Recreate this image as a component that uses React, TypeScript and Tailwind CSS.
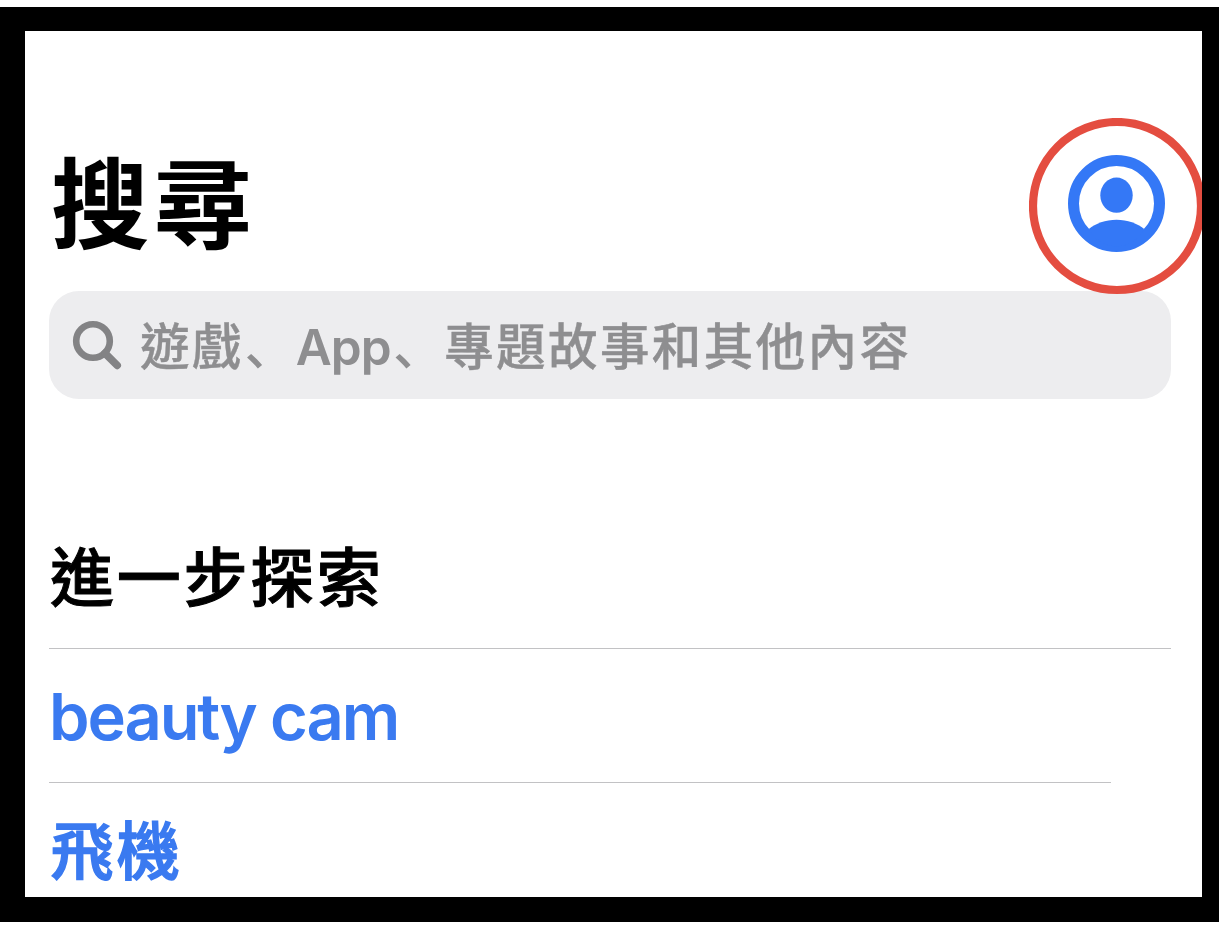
function ProfileIcon() {
  return (
    <svg className="block size-[98px]" viewBox="0 0 98 98" aria-hidden="true">
      <circle cx="49.5" cy="49.5" r="43" fill="#fff" stroke="#3478f6" strokeWidth="11" />
      <ellipse cx="49.5" cy="41.2" rx="16.2" ry="17.6" fill="#3478f6" />
      <path d="M21.8 75.1C28.5 69.5 38.5 65.8 49.5 65.8s21 3.7 27.7 9.3C72.5 84.5 61.5 92.5 49.5 92.5S26.5 84.5 21.8 75.1Z" fill="#3478f6" />
    </svg>
  );
}

function SearchIcon() {
  return (
    <svg className="block size-[50px] shrink-0" viewBox="0 0 50 50" fill="none" stroke="#838385" aria-hidden="true">
      <circle cx="21" cy="21" r="16.8" strokeWidth="6.6" />
      <path d="M33 33.2L45.2 45.4" strokeWidth="7.6" strokeLinecap="round" />
    </svg>
  );
}

function Comma() {
  return <span className="relative left-px font-['Noto_Sans_CJK_JP',sans-serif] [-webkit-text-stroke:0]">、</span>;
}

export default function App() {
  return (
    <div className="h-[925px] w-[1219px] overflow-hidden bg-white pt-[7px] font-[Inter,'Noto_Sans_CJK_TC',sans-serif]">
      <div className="h-[915px] bg-black pt-[24px] pr-[17px] pb-[25px] pl-[24.5px]">
        <main className="flex h-full flex-col overflow-hidden bg-white pl-[24.5px]">
          <header className="flex h-[260px] shrink-0 items-start justify-between pr-[37px]">
            <h1 className="mt-[115px] ml-[2px] text-[98.5px] leading-[120px] font-bold tracking-[4px] text-black">搜尋</h1>
            <div className="relative mt-[123px]">
              <ProfileIcon />
              <svg className="absolute -top-[36px] -left-[38px] size-[177px] max-w-none" viewBox="0 0 177 177" fill="none" aria-hidden="true">
                <circle cx="88" cy="88" r="84" stroke="#e44d40" strokeWidth="8.2" />
              </svg>
            </div>
          </header>

          <div className="mr-[31px] flex h-[108px] shrink-0 items-center rounded-[30px] bg-[#ededef] pl-[23px]">
            <SearchIcon />
            <p className="ml-[18px] text-[49.5px] leading-[60px] font-medium tracking-[2.4px] whitespace-nowrap text-[#8e8e90] [-webkit-text-stroke:0.4px_#8e8e90]">
              遊戲<Comma /><span className="font-semibold tracking-[-0.9px] [-webkit-text-stroke:0]">App</span><span className="ml-[1.5px]"><Comma /></span>專題故事和其他內容
            </p>
          </div>

          <section className="mt-[139px] flex flex-col">
            <h2 className="mr-[31px] flex h-[111px] border-b border-[#c2c2c4] pl-px text-[64px] leading-[80px] font-medium tracking-[2.7px] text-black [-webkit-text-stroke:1px_#000]">
              進一步探索
            </h2>
            <a className="mr-[91px] flex h-[134px] items-center border-b border-[#c2c2c4] pt-[3px] text-[65px] leading-[80px] font-semibold tracking-[-2.1px] text-[#3a7af0]">
              beauty cam
            </a>
            <a className="flex h-[134px] items-center pt-[2px] pl-[1.5px] text-[63px] leading-[80px] font-medium tracking-[3.2px] text-[#3a7af0] [-webkit-text-stroke:1.5px_#3a7af0]">
              飛機
            </a>
          </section>
        </main>
      </div>
    </div>
  );
}
